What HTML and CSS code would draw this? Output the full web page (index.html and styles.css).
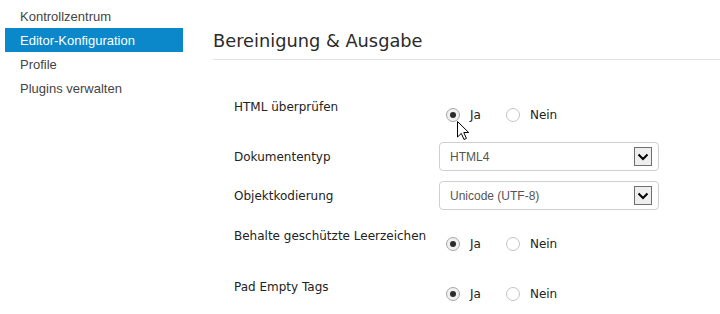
FILE: index.html
```html
<!DOCTYPE html>
<html lang="de">
<head>
<meta charset="utf-8">
<title>Editor-Konfiguration</title>
<link rel="stylesheet" href="styles.css">
</head>
<body>
<div class="page">
  <nav class="sidebar">
    <a class="nav-item">Kontrollzentrum</a>
    <a class="nav-item active">Editor-Konfiguration</a>
    <a class="nav-item">Profile</a>
    <a class="nav-item">Plugins verwalten</a>
  </nav>
  <main class="main">
    <h2 class="title">Bereinigung &amp; Ausgabe</h2>
    <div class="form">
      <div class="row row-radio r1">
        <div class="label">HTML überprüfen</div>
        <div class="radios">
          <span class="radio checked"></span><span class="rlabel">Ja</span>
          <span class="radio"></span><span class="rlabel">Nein</span>
          <svg class="cursor" width="13" height="20" viewBox="0 0 13 20"><path d="M0.5 0.5 L0.5 16 L4.3 12.4 L7 18.5 L9.4 17.4 L6.8 11.5 L11.7 11.5 Z" fill="#fff" stroke="#000" stroke-width="1" stroke-linejoin="miter"/></svg>
        </div>
      </div>
      <div class="row row-select r2">
        <div class="label">Dokumententyp</div>
        <div class="select"><span class="sel-text">HTML4</span><span class="sel-btn"><svg width="12" height="8" viewBox="0 0 12 8"><path d="M1.5 1.5 L6 6 L10.5 1.5" fill="none" stroke="#000" stroke-width="2"/></svg></span></div>
      </div>
      <div class="row row-select r3">
        <div class="label">Objektkodierung</div>
        <div class="select"><span class="sel-text">Unicode (UTF-8)</span><span class="sel-btn"><svg width="12" height="8" viewBox="0 0 12 8"><path d="M1.5 1.5 L6 6 L10.5 1.5" fill="none" stroke="#000" stroke-width="2"/></svg></span></div>
      </div>
      <div class="row row-radio r4">
        <div class="label">Behalte geschützte Leerzeichen</div>
        <div class="radios">
          <span class="radio checked"></span><span class="rlabel">Ja</span>
          <span class="radio"></span><span class="rlabel">Nein</span>
        </div>
      </div>
      <div class="row row-radio r5">
        <div class="label">Pad Empty Tags</div>
        <div class="radios">
          <span class="radio checked"></span><span class="rlabel">Ja</span>
          <span class="radio"></span><span class="rlabel">Nein</span>
        </div>
      </div>
    </div>
  </main>
</div>
</body>
</html>
```
FILE: styles.css
```css
html, body {
  margin: 0;
  padding: 0;
  background: #fff;
}
body {
  width: 720px;
  height: 314px;
  overflow: hidden;
}
.page {
  display: flex;
}
.sidebar {
  width: 178px;
  padding: 4px 0 0 5px;
  display: flex;
  flex-direction: column;
  flex: none;
}
.nav-item {
  display: block;
  height: 24px;
  line-height: 25px;
  padding-left: 15px;
  font-family: "Liberation Sans", Arial, sans-serif;
  font-size: 13px;
  color: #444;
}
.nav-item.active {
  background: #0a88c9;
  color: #fff;
}
.main {
  flex: 1;
  margin-left: 30px;
}
.title {
  margin: 0;
  padding: 29px 0 6px 0;
  line-height: 24px;
  font-family: "DejaVu Sans", Verdana, sans-serif;
  font-weight: normal;
  font-size: 17.8px;
  color: #2b2b2b;
  border-bottom: 1px solid #e3e3e3;
}
.form {
  padding: 0 0 0 21px;
}
.row {
  display: flex;
}
.row-select {
  align-items: center;
}
.label {
  width: 205px;
  flex: none;
  font-family: "DejaVu Sans", Verdana, sans-serif;
  font-size: 12px;
  line-height: 20px;
  color: #222;
}
.r1 { margin-top: 37px; }
.r2 { margin-top: 17px; }
.r3 { margin-top: 10px; }
.r4 { margin-top: 16px; }
.r5 { margin-top: 23px; }
.radios {
  position: relative;
  display: flex;
  align-items: center;
  margin-top: 8px;
  height: 20px;
  padding-left: 7px;
  font-family: "DejaVu Sans", Verdana, sans-serif;
  font-size: 12px;
  color: #222;
}
.r5 .radios {
  margin-top: 7px;
}
.radio {
  width: 12px;
  height: 12px;
  border-radius: 50%;
  border: 1px solid #c4c4c4;
  background: #fff;
  position: relative;
  flex: none;
}
.radio.checked {
  border-color: #a6a6a6;
  background: #f0f0f0;
}
.radio.checked::after {
  content: "";
  position: absolute;
  left: 3px;
  top: 3px;
  width: 6px;
  height: 6px;
  border-radius: 50%;
  background: #2b2b2b;
}
.rlabel {
  margin-left: 10px;
  margin-right: 25px;
}
.select {
  width: 218px;
  height: 27px;
  border: 1px solid #cfcfcf;
  border-radius: 4px;
  display: flex;
  align-items: center;
  justify-content: space-between;
  font-family: "Liberation Sans", Arial, sans-serif;
  font-size: 12px;
  color: #555;
}
.sel-text {
  padding-left: 10px;
}
.sel-btn {
  width: 16px;
  height: 17px;
  margin-right: 6px;
  border: 1px solid #6f6f6f;
  background: #eeeeee;
  display: flex;
  align-items: center;
  justify-content: center;
}
.cursor {
  position: absolute;
  left: 18px;
  top: 16px;
}
```
